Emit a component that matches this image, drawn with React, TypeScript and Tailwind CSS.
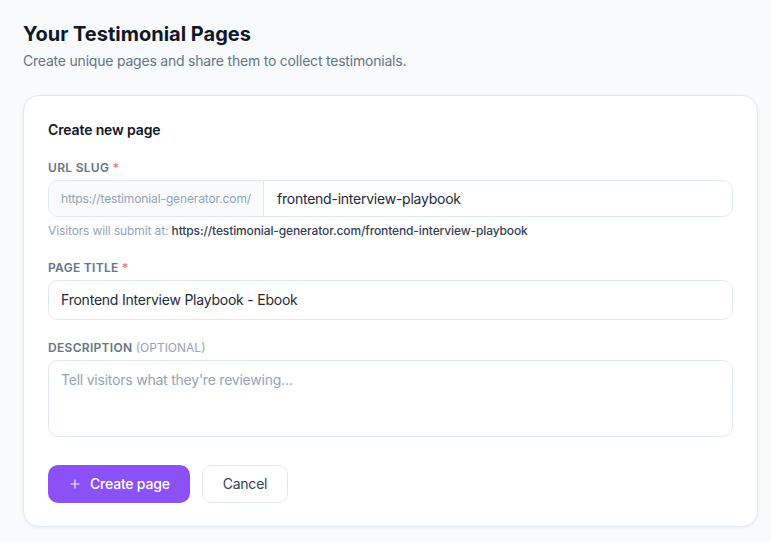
import React from "react";

export default function App() {
  return (
    <div
      className="min-h-screen bg-[#f8fafc] pl-[23px] pr-[13px] pt-5 pb-4"
      style={{ fontFamily: "Inter, 'Noto Sans', sans-serif" }}
    >
      <h1 className="text-[20px] leading-7 font-bold text-[#0f172a]">
        Your Testimonial Pages
      </h1>
      <p className="mt-[3px] text-sm leading-5 tracking-[-0.015em] text-[#64748b]">
        Create unique pages and share them to collect testimonials.
      </p>

      <div className="mt-6 rounded-2xl border border-[#e2e8f0] bg-white px-6 pt-6 pb-[23px] shadow-[0_1px_3px_rgba(15,23,42,0.06)]">
        <h2 className="text-sm leading-5 font-semibold tracking-[-0.01em] text-[#0f172a]">Create new page</h2>

        <div className="mt-5">
          <label className="block text-xs leading-4 font-semibold uppercase tracking-[0.025em] text-[#64748b]">
            URL Slug <span className="text-[#f87171]">*</span>
          </label>
          <div className="mt-1 flex h-[37px] overflow-hidden rounded-[10px] border border-[#e2e8f0] bg-white">
            <div className="flex items-center border-r border-[#e2e8f0] bg-[#f8fafc] px-3 text-xs tracking-[-0.01em] text-[#94a3b8]">
              https://testimonial-generator.com/
            </div>
            <div className="flex flex-1 items-center pl-[13px] text-sm tracking-[-0.017em] text-[#1e293b]">
              frontend-interview-playbook
            </div>
          </div>
          <p className="mt-1.5 text-xs leading-4 tracking-[-0.01em] text-[#94a3b8]">
            Visitors will submit at:{" "}
            <span className="font-medium text-[#334155]">
              https://testimonial-generator.com/frontend-interview-playbook
            </span>
          </p>
        </div>

        <div className="mt-[21px]">
          <label className="block text-xs leading-4 font-semibold uppercase tracking-[0.025em] text-[#64748b]">
            Page Title <span className="text-[#f87171]">*</span>
          </label>
          <div className="mt-1 flex h-10 items-center rounded-[10px] border border-[#e2e8f0] bg-white px-3 text-sm tracking-[-0.016em] text-[#1e293b]">
            Frontend Interview Playbook - Ebook
          </div>
        </div>

        <div className="mt-5">
          <label className="block text-xs leading-4 font-semibold uppercase tracking-[0.025em] text-[#64748b]">
            Description <span className="font-normal tracking-normal text-[#94a3b8]">(Optional)</span>
          </label>
          <div className="mt-1 h-[77px] rounded-[10px] border border-[#e2e8f0] bg-white px-3 pt-[9px] text-sm leading-5 tracking-[-0.016em] text-[#94a3b8]">
            Tell visitors what they're reviewing...
          </div>
        </div>

        <div className="mt-7 flex gap-3">
          <button className="flex h-[38px] items-center gap-2 rounded-[10px] bg-[#8b50f6] px-5 text-sm font-medium tracking-[-0.015em] text-white">
            <svg width="14" height="14" viewBox="0 0 24 24" fill="none" stroke="currentColor" strokeWidth="2" strokeLinecap="round" className="opacity-90">
              <path d="M12 5v14M5 12h14" />
            </svg>
            Create page
          </button>
          <button className="flex h-[38px] items-center rounded-[10px] border border-[#e2e8f0] bg-white px-5 text-sm tracking-[-0.015em] text-[#334155]">
            Cancel
          </button>
        </div>
      </div>
    </div>
  );
}
